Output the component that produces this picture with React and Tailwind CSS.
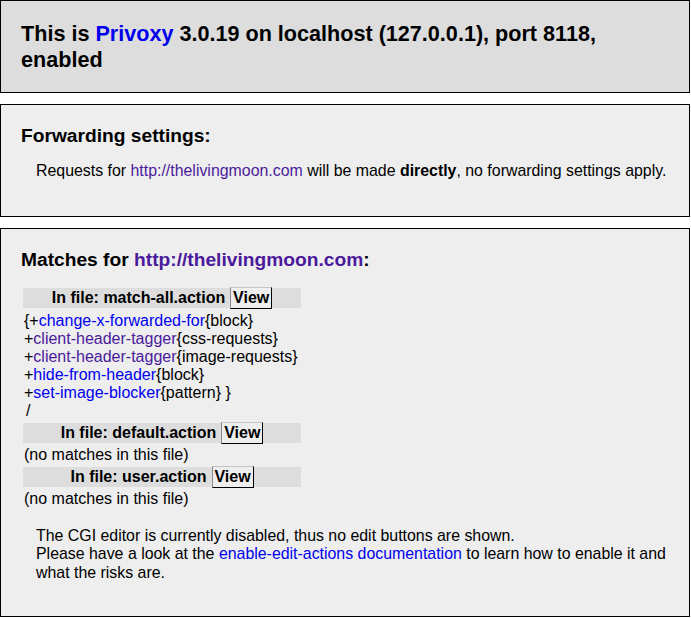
import React from 'react';

// Privoxy "show-url-info" page
const Link = ({ visited, children }) => (
  <a href="#" className={visited ? 'text-[#4b1a9c] no-underline' : 'text-[#0000ee] no-underline'}>
    {children}
  </a>
);

const FileHeader = ({ name }) => (
  <div className="h-[20px] bg-[#dddddd] flex items-center justify-center font-bold leading-[18px]">
    <span>In file: {name}</span>
    <button className="ml-[5px] h-[22px] w-[42px] flex items-center justify-center bg-[#eeeeee] border border-t-[#c4c4c4] border-l-[#8a8a8a] border-r-black border-b-black font-bold leading-[18px]">
      View
    </button>
  </div>
);

const Action = ({ name, arg, visited, lead = '+', tail = '' }) => (
  <div>
    {lead}
    <Link visited={visited}>{name}</Link>
    {'{' + arg + '}' + tail}
  </div>
);

export default function App() {
  return (
    <div className="w-[690px] min-h-[618px] bg-white text-black text-[16px] leading-[1.15] font-['Liberation_Sans',Arial,Helvetica,sans-serif]">
      <div className="border border-black bg-[#dddddd] p-5">
        <h1 className="text-[21.6px] font-bold leading-[25.5px]">
          This is <Link>Privoxy</Link> 3.0.19 on localhost (127.0.0.1), port 8118, enabled
        </h1>
      </div>

      <div className="mt-[11px] h-[113px] border border-black bg-[#eeeeee] p-5">
        <h2 className="text-[19.2px] font-bold leading-[22px]">Forwarding settings:</h2>
        <p className="mt-[15px] ml-[15px] whitespace-nowrap text-[15.9px] leading-[18.4px]">
          Requests for <Link visited>http://thelivingmoon.com</Link> will be made <b>directly</b>, no
          forwarding settings apply.
        </p>
      </div>

      <div className="mt-[11px] h-[389px] border border-black bg-[#eeeeee] px-5 pt-5">
        <h2 className="text-[19.2px] font-bold leading-[22px]">
          Matches for <Link visited>http://thelivingmoon.com</Link>:
        </h2>

        <div className="mt-[15px] w-[282px] p-[2px] flex flex-col gap-[2px]">
          <FileHeader name="match-all.action" />
          <div className="px-[1px] pt-[2px] pb-[1px] leading-[18px]">
            <Action lead="{+" name="change-x-forwarded-for" arg="block" />
            <Action name="client-header-tagger" arg="css-requests" visited />
            <Action name="client-header-tagger" arg="image-requests" visited />
            <Action name="hide-from-header" arg="block" />
            <Action name="set-image-blocker" arg="pattern" tail=" }" />
            <div className="pl-[2px]">/</div>
          </div>
          <FileHeader name="default.action" />
          <div className="h-[20px] px-[1px] pt-[1px] leading-[18px]">(no matches in this file)</div>
          <FileHeader name="user.action" />
          <div className="h-[20px] px-[1px] pt-[1px] leading-[18px]">(no matches in this file)</div>
        </div>

        <p className="mt-4 ml-[15px] whitespace-nowrap text-[15.9px] leading-[18.4px]">
          The CGI editor is currently disabled, thus no edit buttons are shown.
          <br />
          Please have a look at the <Link>enable-edit-actions documentation</Link> to learn how to enable it and
          <br />
          what the risks are.
        </p>
      </div>
    </div>
  );
}
